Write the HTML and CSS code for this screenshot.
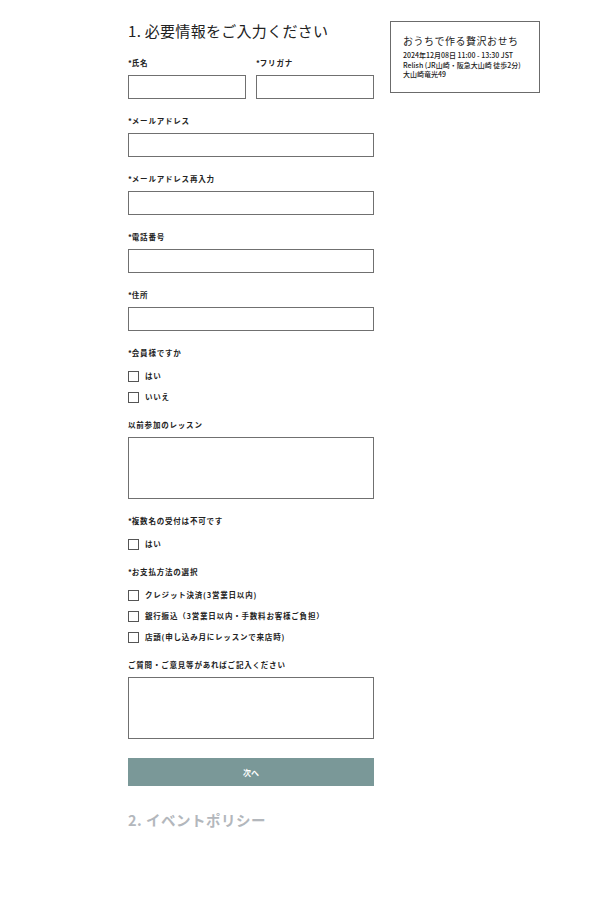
FILE: index.html
```html
<!DOCTYPE html>
<html>
<head>
<title>お申し込み</title>
<link rel="stylesheet" href="styles.css">
</head>
<body>
<div class="page">
  <div class="main">
    <h2 class="step">1. 必要情報をご入力ください</h2>
    <form class="entry">
      <div class="row">
        <div class="field">
          <label><span class="req">*</span>氏名</label>
          <input type="text">
        </div>
        <div class="field">
          <label><span class="req">*</span>フリガナ</label>
          <input type="text">
        </div>
      </div>
      <div class="field">
        <label><span class="req">*</span>メールアドレス</label>
        <input type="text">
      </div>
      <div class="field">
        <label><span class="req">*</span>メールアドレス再入力</label>
        <input type="text">
      </div>
      <div class="field">
        <label><span class="req">*</span>電話番号</label>
        <input type="text">
      </div>
      <div class="field">
        <label><span class="req">*</span>住所</label>
        <input type="text">
      </div>
      <div class="field">
        <label><span class="req">*</span>会員様ですか</label>
        <div class="checks">
          <div class="check"><span class="box"></span>はい</div>
          <div class="check"><span class="box"></span>いいえ</div>
        </div>
      </div>
      <div class="field">
        <label>以前参加のレッスン</label>
        <textarea></textarea>
      </div>
      <div class="field">
        <label><span class="req">*</span>複数名の受付は不可です</label>
        <div class="checks">
          <div class="check"><span class="box"></span>はい</div>
        </div>
      </div>
      <div class="field">
        <label><span class="req">*</span>お支払方法の選択</label>
        <div class="checks">
          <div class="check"><span class="box"></span>クレジット決済(3営業日以内)</div>
          <div class="check"><span class="box"></span>銀行振込（3営業日以内・手数料お客様ご負担）</div>
          <div class="check"><span class="box"></span>店頭(申し込み月にレッスンで来店時)</div>
        </div>
      </div>
      <div class="field">
        <label>ご質問・ご意見等があればご記入ください</label>
        <textarea></textarea>
      </div>
      <button type="button" class="next">次へ</button>
    </form>
    <h2 class="step muted">2. イベントポリシー</h2>
  </div>
  <div class="summary">
    <div class="summary-title">おうちで作る贅沢おせち</div>
    <div class="summary-line">2024年12月08日 11:00 - 13:30 JST</div>
    <div class="summary-line">Relish (JR山崎・阪急大山崎 徒歩2分)</div>
    <div class="summary-line">大山崎竜光49</div>
  </div>
</div>
</body>
</html>
```
FILE: styles.css
```css
body {
  margin: 0;
  background: #fff;
  color: #222;
  font-family: "Noto Sans CJK JP", "Liberation Sans", sans-serif;
}
.page {
  display: flex;
  align-items: flex-start;
  gap: 16px;
  padding: 21px 0 0 128px;
}
.main {
  width: 246px;
}
.step {
  margin: 0 0 16px;
  font-size: 15px;
  font-weight: 400;
  letter-spacing: 0.3px;
  line-height: 20px;
}
.step.muted {
  margin-top: 24px;
  color: #b3b7bc;
  font-weight: 700;
  letter-spacing: 0.5px;
  font-size: 14.5px;
}
.entry {
  display: flex;
  flex-direction: column;
}
.row {
  display: flex;
  gap: 10px;
}
.row .field {
  flex: 1;
}
.field {
  display: flex;
  flex-direction: column;
  margin-bottom: 16px;
}
.field label {
  font-size: 7.5px;
  font-weight: 700;
  line-height: 12px;
  letter-spacing: 0.8px;
  margin-bottom: 6px;
}
.req {
  letter-spacing: 0;
}
.field input {
  box-sizing: border-box;
  height: 24px;
  width: 100%;
  margin: 0;
  border: 1px solid #707070;
  border-radius: 0;
  outline: none;
}
.field textarea {
  box-sizing: border-box;
  height: 62px;
  width: 100%;
  margin: 0;
  border: 1px solid #707070;
  border-radius: 0;
  resize: none;
}
.checks {
  display: flex;
  flex-direction: column;
  gap: 9px;
  padding-top: 5px;
}
.check {
  display: flex;
  align-items: center;
  gap: 6px;
  font-size: 7.5px;
  font-weight: 700;
  letter-spacing: 0.8px;
  line-height: 12px;
}
.box {
  width: 9px;
  height: 9px;
  border: 1px solid #555;
  flex: none;
}
.next {
  margin-top: 3px;
  height: 28px;
  width: 100%;
  border: none;
  background: #7a9898;
  color: #fff;
  font-family: "Noto Sans CJK JP", sans-serif;
  font-size: 8px;
  font-weight: 700;
}
.summary {
  box-sizing: border-box;
  width: 150px;
  border: 1px solid #6b6b6b;
  padding: 12px 12px 12px;
}
.summary-title {
  font-size: 10px;
  letter-spacing: 0.5px;
  line-height: 14px;
  margin-bottom: 3px;
}
.summary-line {
  font-size: 7px;
  line-height: 9.5px;
  font-weight: 500;
}
```
